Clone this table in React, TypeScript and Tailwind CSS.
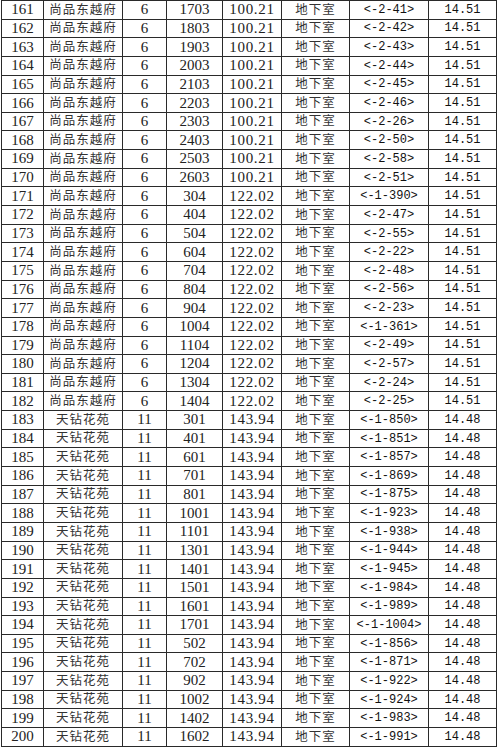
import React from 'react';

type Row = [number, string, string, string, string, string];

const A = '尚品东越府';
const B = '天钻花苑';

const rows: Row[] = [
    [161, A, '6', '1703', '100.21', '<-2-41>'],
    [162, A, '6', '1803', '100.21', '<-2-42>'],
    [163, A, '6', '1903', '100.21', '<-2-43>'],
    [164, A, '6', '2003', '100.21', '<-2-44>'],
    [165, A, '6', '2103', '100.21', '<-2-45>'],
    [166, A, '6', '2203', '100.21', '<-2-46>'],
    [167, A, '6', '2303', '100.21', '<-2-26>'],
    [168, A, '6', '2403', '100.21', '<-2-50>'],
    [169, A, '6', '2503', '100.21', '<-2-58>'],
    [170, A, '6', '2603', '100.21', '<-2-51>'],
    [171, A, '6', '304', '122.02', '<-1-390>'],
    [172, A, '6', '404', '122.02', '<-2-47>'],
    [173, A, '6', '504', '122.02', '<-2-55>'],
    [174, A, '6', '604', '122.02', '<-2-22>'],
    [175, A, '6', '704', '122.02', '<-2-48>'],
    [176, A, '6', '804', '122.02', '<-2-56>'],
    [177, A, '6', '904', '122.02', '<-2-23>'],
    [178, A, '6', '1004', '122.02', '<-1-361>'],
    [179, A, '6', '1104', '122.02', '<-2-49>'],
    [180, A, '6', '1204', '122.02', '<-2-57>'],
    [181, A, '6', '1304', '122.02', '<-2-24>'],
    [182, A, '6', '1404', '122.02', '<-2-25>'],
    [183, B, '11', '301', '143.94', '<-1-850>'],
    [184, B, '11', '401', '143.94', '<-1-851>'],
    [185, B, '11', '601', '143.94', '<-1-857>'],
    [186, B, '11', '701', '143.94', '<-1-869>'],
    [187, B, '11', '801', '143.94', '<-1-875>'],
    [188, B, '11', '1001', '143.94', '<-1-923>'],
    [189, B, '11', '1101', '143.94', '<-1-938>'],
    [190, B, '11', '1301', '143.94', '<-1-944>'],
    [191, B, '11', '1401', '143.94', '<-1-945>'],
    [192, B, '11', '1501', '143.94', '<-1-984>'],
    [193, B, '11', '1601', '143.94', '<-1-989>'],
    [194, B, '11', '1701', '143.94', '<-1-1004>'],
    [195, B, '11', '502', '143.94', '<-1-856>'],
    [196, B, '11', '702', '143.94', '<-1-871>'],
    [197, B, '11', '902', '143.94', '<-1-922>'],
    [198, B, '11', '1002', '143.94', '<-1-924>'],
    [199, B, '11', '1402', '143.94', '<-1-983>'],
    [200, B, '11', '1602', '143.94', '<-1-991>'],
];

const serif = "font-['Liberation_Serif','Noto_Sans_CJK_SC',serif] text-[15px] text-[#222]";
const cjk = "font-['Noto_Sans_CJK_SC',sans-serif] text-[12.5px] tracking-[1px] text-[#333] pb-[2px]";
const mono = "font-['Liberation_Mono','Noto_Sans_CJK_SC',monospace] text-[12px] text-[#111]";

const cell = 'flex items-center justify-center border-r border-b border-[#2a2a2a] leading-none whitespace-nowrap';

export default function App() {
    return (
        <div className="w-[499px] h-[750px] bg-white overflow-hidden">
            <div className="ml-[1px] grid grid-cols-[42px_79px_44px_56px_59px_68px_79px_68px] auto-rows-[18.65px] border-l border-t border-[#2a2a2a] w-fit">
                {rows.map(([no, name, bld, room, area, code]) => (
                    <React.Fragment key={no}>
                        <div className={`${cell} ${serif}`}>{no}</div>
                        <div className={`${cell} ${cjk}`}>{name}</div>
                        <div className={`${cell} ${serif}`}>{bld}</div>
                        <div className={`${cell} ${serif}`}>{room}</div>
                        <div className={`${cell} ${serif} tracking-[0.7px]`}>{area}</div>
                        <div className={`${cell} ${cjk}`}>地下室</div>
                        <div className={`${cell} ${mono}`}>{code}</div>
                        <div className={`${cell} ${mono}`}>{name === A ? '14.51' : '14.48'}</div>
                    </React.Fragment>
                ))}
            </div>
        </div>
    );
}
